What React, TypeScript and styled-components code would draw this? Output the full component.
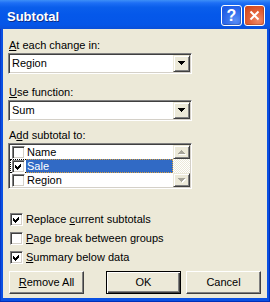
import React from "react";
import styled, { createGlobalStyle } from "styled-components";

const Global = createGlobalStyle`
  html, body { margin: 0; padding: 0; background: #ffffff; }
  body { font-family: "Liberation Sans", Arial, sans-serif; font-size: 11px; color: #000; }
  * { box-sizing: border-box; }
`;

const Window = styled.div`
  width: 270px;
  height: 302px;
  display: flex;
  flex-direction: column;
  background: #0853e6;
`;

const TitleBar = styled.div`
  height: 29px;
  flex: none;
  display: flex;
  align-items: center;
  padding: 2px 5px 0 7px;
  background: linear-gradient(
    180deg,
    #3d8ff7 0%,
    #1e6ff5 10%,
    #0a5eeb 25%,
    #0558ea 50%,
    #0556e8 85%,
    #0a4fd8 100%
  );
`;

const Title = styled.div`
  flex: 1;
  padding-top: 1px;
  font-family: "Liberation Sans", Arial, sans-serif;
  font-weight: bold;
  font-size: 13px;
  line-height: 15px;
  color: #ffffff;
  text-shadow: 1px 1px #0a2d8c;
`;

const CapButton = styled.div<{ $kind: "help" | "close" }>`
  width: 21px;
  height: 21px;
  margin-left: 2px;
  border: 1px solid #ffffff;
  border-radius: 3px;
  display: flex;
  align-items: center;
  justify-content: center;
  color: #ffffff;
  font-family: "Liberation Sans", Arial, sans-serif;
  font-weight: bold;
  font-size: 16px;
  line-height: 1;
  background: ${(p) =>
    p.$kind === "help"
      ? "radial-gradient(circle at 70% 75%, #5b8ff5 0%, #3a74ee 35%, #1d5ae4 80%)"
      : "radial-gradient(circle at 70% 75%, #f08a66 0%, #e4643c 40%, #d04a1e 85%)"};
  box-shadow: inset -1px -1px rgba(0, 0, 0, 0.18);
`;

const Frame = styled.div`
  flex: 1;
  display: flex;
  padding: 0 3px 4px 3px;
  background: #0a50e2;
  box-shadow: inset -1px 0 #0030b8, inset 0 -1px #0030b8, inset 1px 0 #0838c8;
`;

const Body = styled.div`
  flex: 1;
  background: #ece9d8;
  display: flex;
  flex-direction: column;
  padding-left: 5px;
`;

const Label = styled.div<{ $top: number }>`
  margin-top: ${(p) => p.$top}px;
  margin-left: 1px;
  line-height: 13px;
  height: 13px;
  white-space: nowrap;
`;

const Key = styled.span`
  text-decoration: underline;
`;

const Sunken = styled.div<{ $top: number; $height: number }>`
  margin-top: ${(p) => p.$top}px;
  width: 184px;
  height: ${(p) => p.$height}px;
  background: #ffffff;
  border: 1px solid;
  border-color: #808080 #ffffff #ffffff #808080;
  box-shadow: inset 1px 1px #404040, inset -1px -1px #d4d0c8;
  padding: 1px;
  display: flex;
`;

const ComboValue = styled.div`
  flex: 1;
  padding-left: 2px;
  line-height: 17px;
  white-space: nowrap;
`;

const Raised = styled.div<{ $w: number; $h: number }>`
  width: ${(p) => p.$w}px;
  height: ${(p) => p.$h}px;
  flex: none;
  background: #ece9d8;
  border: 1px solid;
  border-color: #ece9d8 #404040 #404040 #ece9d8;
  box-shadow: inset 1px 1px #ffffff, inset -1px -1px #808080;
  display: flex;
  align-items: center;
  justify-content: center;
`;

const Rows = styled.div`
  flex: 1;
  display: flex;
  flex-direction: column;
`;

const Row = styled.div`
  height: 14px;
  display: flex;
  align-items: center;
`;

const ListCheckCell = styled.div<{ $focus?: boolean }>`
  height: 14px;
  width: 16px;
  padding-left: 1px;
  display: flex;
  align-items: center;
  border: 1px dotted ${(p) => (p.$focus ? "#000" : "transparent")};
  border-right: none;
`;

const ItemText = styled.div<{ $sel?: boolean }>`
  flex: 1;
  height: 14px;
  line-height: 12px;
  padding-left: 1px;
  white-space: nowrap;
  background: ${(p) => (p.$sel ? "#316ac5" : "transparent")};
  color: ${(p) => (p.$sel ? "#ffffff" : "#000000")};
  border: 1px dotted ${(p) => (p.$sel ? "#d8a040" : "transparent")};
  border-left: none;
`;

const ScrollBar = styled.div`
  width: 17px;
  display: flex;
  flex-direction: column;
`;

const Track = styled.div`
  height: 14px;
  background: repeating-conic-gradient(#ffffff 0% 25%, #ece9d8 0% 50%) 0 0 / 2px 2px;
`;

const Box = styled.div`
  width: 13px;
  height: 13px;
  flex: none;
  background: #ffffff;
  border: 1px solid;
  border-color: #808080 #ffffff #ffffff #808080;
  box-shadow: inset 1px 1px #404040, inset -1px -1px #d4d0c8;
  display: flex;
  align-items: center;
  justify-content: center;
`;

const Options = styled.div`
  margin-top: 24px;
  margin-left: 2px;
  display: flex;
  flex-direction: column;
  gap: 6px;
`;

const OptionRow = styled.div`
  height: 13px;
  display: flex;
  align-items: center;
  gap: 3px;
  line-height: 13px;
  white-space: nowrap;
`;

const ButtonRow = styled.div`
  margin-top: 7px;
  margin-left: 1px;
  display: flex;
`;

const PushButton = styled.div<{ $gap: number; $default?: boolean }>`
  margin-left: ${(p) => p.$gap}px;
  width: 75px;
  height: 23px;
  background: #ece9d8;
  border: 1px solid;
  border-color: ${(p) => (p.$default ? "#000" : "#ffffff #404040 #404040 #ffffff")};
  box-shadow: ${(p) =>
    p.$default
      ? "inset 1px 1px #ffffff, inset -1px -1px #404040, inset -2px -2px #808080"
      : "inset -1px -1px #808080, inset 1px 1px #ece9d8"};
  display: flex;
  align-items: center;
  justify-content: center;
  line-height: 13px;
  white-space: nowrap;
`;

const Check = () => (
  <svg width="9" height="9" viewBox="0 0 9 9" shapeRendering="crispEdges">
    <polygon points="1,3 3,5 7,1 7,4 3,8 1,6" fill="#000" />
  </svg>
);

const Arrow = ({ dir, disabled }: { dir: "up" | "down"; disabled?: boolean }) => {
  const pts = dir === "down" ? "0,0 7,0 3.5,4" : "0,4 7,4 3.5,0";
  return (
    <svg width="8" height="5" viewBox="0 0 8 5" shapeRendering="crispEdges">
      {disabled && (
        <polygon points={pts} transform="translate(1,1)" fill="#ffffff" />
      )}
      <polygon points={pts} fill={disabled ? "#a6a499" : "#000"} />
    </svg>
  );
};

const Combo = ({ value, top }: { value: string; top: number }) => (
  <Sunken $top={top} $height={21}>
    <ComboValue>{value}</ComboValue>
    <Raised $w={17} $h={17}>
      <Arrow dir="down" />
    </Raised>
  </Sunken>
);

const items = [
  { name: "Name", checked: false },
  { name: "Sale", checked: true, sel: true },
  { name: "Region", checked: false },
];

export default function App() {
  return (
    <>
      <Global />
      <Window>
        <TitleBar>
          <Title>Subtotal</Title>
          <CapButton $kind="help">?</CapButton>
          <CapButton $kind="close">
            <svg width="11" height="11" viewBox="0 0 11 11">
              <path d="M1.5 1.5 L9.5 9.5 M9.5 1.5 L1.5 9.5" stroke="#fff" strokeWidth="2" />
            </svg>
          </CapButton>
        </TitleBar>
        <Frame>
          <Body>
            <Label $top={10}>
              <Key>A</Key>t each change in:
            </Label>
            <Combo value="Region" top={1} />
            <Label $top={12}>
              <Key>U</Key>se function:
            </Label>
            <Combo value="Sum" top={1} />
            <Label $top={8}>
              A<Key>d</Key>d subtotal to:
            </Label>
            <Sunken $top={1} $height={46}>
              <Rows>
                {items.map((it) => (
                  <Row key={it.name}>
                    <ListCheckCell $focus={it.sel}>
                      <Box>{it.checked && <Check />}</Box>
                    </ListCheckCell>
                    <ItemText $sel={it.sel}>{it.name}</ItemText>
                  </Row>
                ))}
              </Rows>
              <ScrollBar>
                <Raised $w={17} $h={14}>
                  <Arrow dir="up" disabled />
                </Raised>
                <Track />
                <Raised $w={17} $h={14}>
                  <Arrow dir="down" disabled />
                </Raised>
              </ScrollBar>
            </Sunken>
            <Options>
              <OptionRow>
                <Box>
                  <Check />
                </Box>
                <span>
                  Replace <Key>c</Key>urrent subtotals
                </span>
              </OptionRow>
              <OptionRow>
                <Box />
                <span>
                  <Key>P</Key>age break between groups
                </span>
              </OptionRow>
              <OptionRow>
                <Box>
                  <Check />
                </Box>
                <span>
                  <Key>S</Key>ummary below data
                </span>
              </OptionRow>
            </Options>
            <ButtonRow>
              <PushButton $gap={0}>
                <span>
                  <Key>R</Key>emove All
                </span>
              </PushButton>
              <PushButton $gap={22} $default>
                OK
              </PushButton>
              <PushButton $gap={5}>Cancel</PushButton>
            </ButtonRow>
          </Body>
        </Frame>
      </Window>
    </>
  );
}
